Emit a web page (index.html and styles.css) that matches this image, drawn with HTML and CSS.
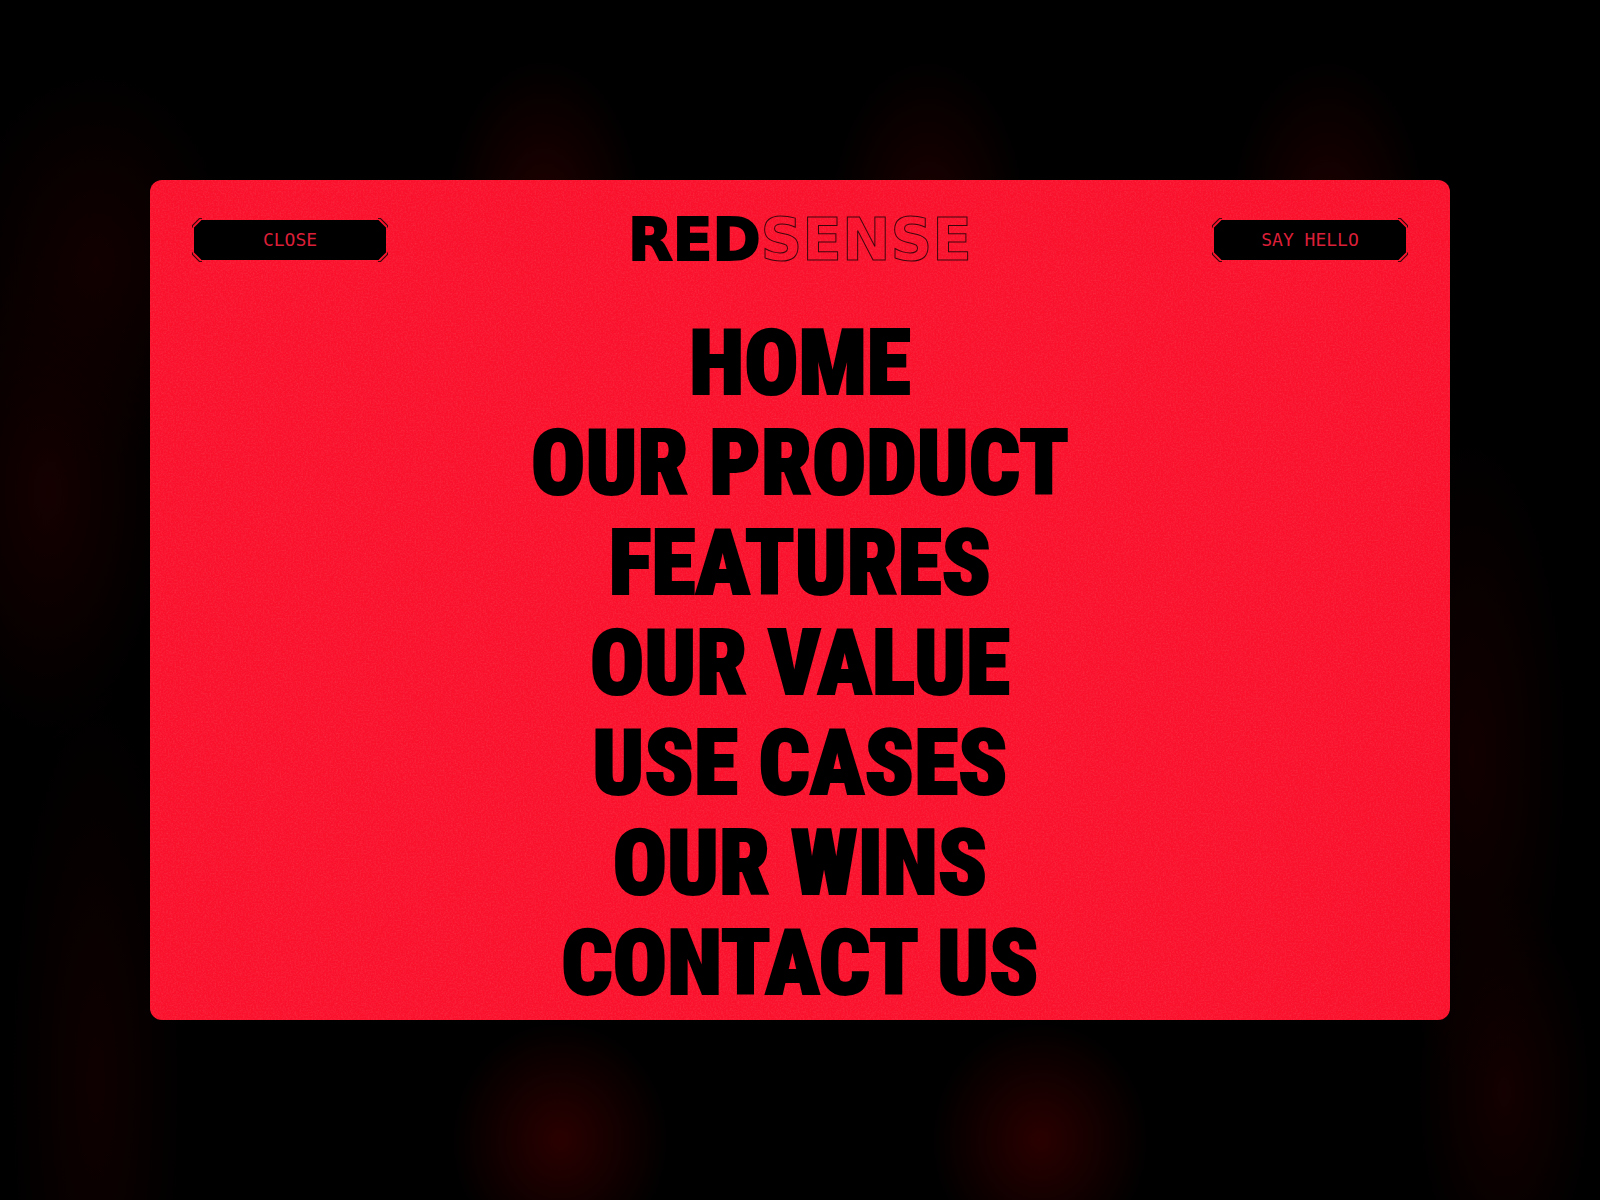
FILE: index.html
```
<!DOCTYPE html>
<html lang="en">
  <head>
    <meta charset="utf-8">
    <meta name="viewport" content="width=device-width, initial-scale=1">
    <title>RedSense</title>
    <link rel="stylesheet" href="styles.css">
  </head>
  <body>
    <!-- button frame and grain, reused below -->
    <svg class="defs" aria-hidden="true">
      <symbol id="frame" viewBox="0 0 196 44">
        <path d="M9 2H187L194 8V36L187 42H9L2 36V8Z" fill="#000"/>
        <g fill="none" stroke="#3a060c" stroke-width="1.200">
          <path d="M.5 9.500V7.500L7.500 .500H10"/>
          <path d="M186 .500H188.500L195.500 7.500V9.500"/>
          <path d="M.5 34.500V36.500L7.500 43.500H10"/>
          <path d="M186 43.500H188.500L195.500 36.500V34.500"/>
        </g>
        <g stroke="#fb152f" stroke-width="1.500">
          <path d="M1.500 9L9 1.500M187 1.500L194.500 9M1.500 35L9 42.500M187 42.500L194.500 35"/>
        </g>
      </symbol>
      <filter id="noise" x="0" y="0" width="100%" height="100%">
        <feTurbulence type="fractalNoise" baseFrequency="0.6" numOctaves="2" seed="4"/>
        <feColorMatrix values="0 0 0 0 1  0 0 0 0 .5  0 0 0 0 .55  1.2 0 0 0 -.45"/>
      </filter>
    </svg>

    <div class="page">
      <div class="panel">
        <svg class="grain" aria-hidden="true"><rect width="100%" height="100%" filter="url(#noise)"/></svg>

        <header class="header">
          <button type="button" class="btn">
            <svg class="btn-frame" aria-hidden="true"><use href="#frame"/></svg>
            <span class="btn-text">CLOSE</span>
          </button>
          <a href="#" class="logo"><span class="logo-red">RED</span><span class="logo-sense">SENSE</span></a>
          <button type="button" class="btn">
            <svg class="btn-frame" aria-hidden="true"><use href="#frame"/></svg>
            <span class="btn-text">SAY HELLO</span>
          </button>
        </header>

        <nav class="menu">
          <a href="#home">HOME</a>
          <a href="#product">OUR PRODUCT</a>
          <a href="#features">FEATURES</a>
          <a href="#value">OUR VALUE</a>
          <a href="#cases">USE CASES</a>
          <a href="#wins">OUR WINS</a>
          <a href="#contact">CONTACT US</a>
        </nav>
      </div>
    </div>
  </body>
</html>
```
FILE: styles.css
```
*{
	box-sizing:border-box;
}
body{
	margin:0;
	background:#000;
}
a{
	color:#000;
	text-decoration:none;
}
.defs{
	position:absolute;
	width:0;
	height:0;
}

/* dim red glows behind the panel */
.page{
	display:flex;
	align-items:center;
	min-height:100vh;
	padding:0 150px;
	background:
		radial-gradient(100px 160px at 34% 18%, #200000, transparent),
		radial-gradient(100px 160px at 58% 18%, #1c0000, transparent),
		radial-gradient(100px 160px at 83% 18%, #1c0000, transparent),
		radial-gradient(110px 120px at 35% 95%, #2a0000, transparent),
		radial-gradient(110px 120px at 65% 95%, #2a0000, transparent),
		radial-gradient(140px 200px at 6% 22%, #120000, transparent),
		radial-gradient(120px 250px at 3% 41%, #150000, transparent),
		radial-gradient(90px 400px at 6% 90%, #0f0000, transparent),
		radial-gradient(100px 330px at 92% 63%, #120000, transparent),
		radial-gradient(90px 200px at 94% 91%, #140000, transparent),
		#000;
}
.panel{
	position:relative;
	flex:1;
	padding:38px 42px 6px;
	border-radius:12px;
	background:#fa112c;
	overflow:hidden;
}
.grain{
	position:absolute;
	top:0;
	left:0;
	width:100%;
	height:100%;
	opacity:.2;
}

.header{
	position:relative;
	display:flex;
	justify-content:space-between;
	align-items:center;
	height:44px;
}
.btn{
	position:relative;
	width:196px;
	height:44px;
	padding:0;
	border:0;
	background:none;
	color:#dc1f38;
	font:18px/44px "DejaVu Sans Mono", monospace;
	cursor:pointer;
}
.btn-frame{
	position:absolute;
	top:0;
	left:0;
	width:100%;
	height:100%;
}
.btn-text{
	position:relative;
}
.logo{
	font:bold 58px/44px "DejaVu Sans", sans-serif;
	white-space:nowrap;
}
.logo-red{
	-webkit-text-stroke:2px #000;
}
.logo-sense{
	color:transparent;
	-webkit-text-stroke:1px #3a060c;
}

.menu{
	position:relative;
	display:flex;
	flex-direction:column;
	align-items:center;
	margin-top:52px;
}
.menu a{
	font:900 90px/100px "Roboto Condensed", Roboto, sans-serif;
	white-space:nowrap;
	-webkit-text-stroke:2px #000;
}
```
